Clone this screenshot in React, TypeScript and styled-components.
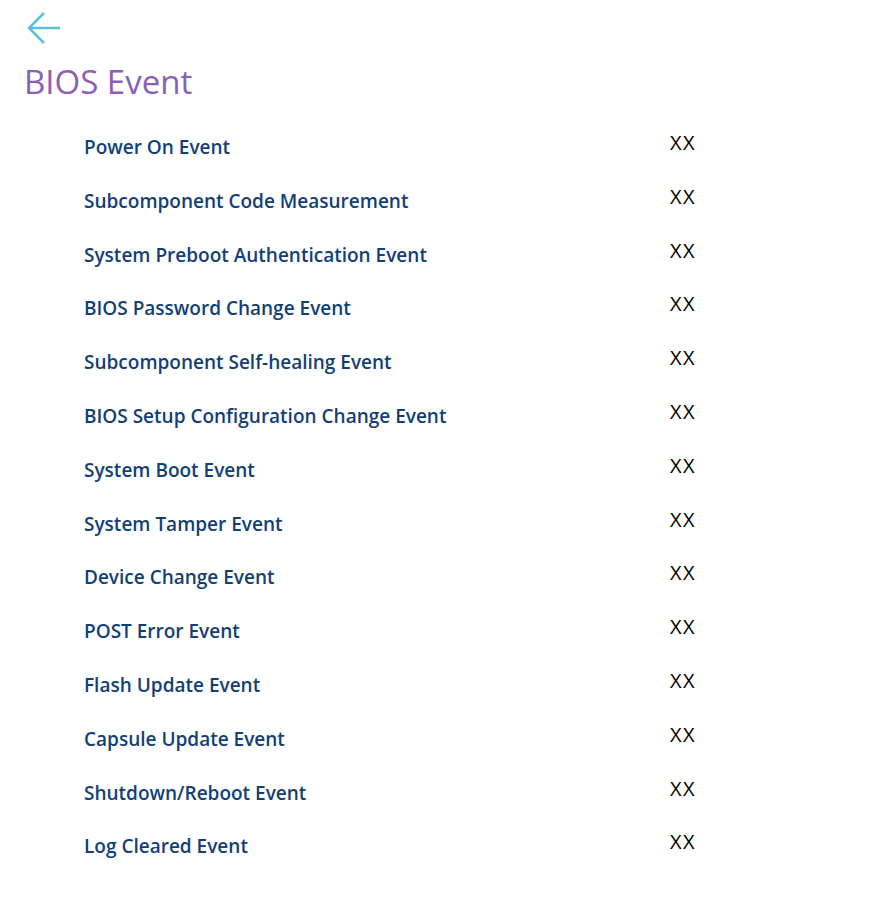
import { Fragment } from 'react'
import styled, { createGlobalStyle } from 'styled-components'

const GlobalStyle = createGlobalStyle`
  body {
    margin: 0;
    background: #fff;
    font-family: 'Open Sans', 'Liberation Sans', sans-serif;
  }
`

const Page = styled.div`
  padding: 10px 24px 40px;
`

const BackButton = styled.button`
  display: block;
  border: 0;
  background: none;
  padding: 0;
  margin-left: 2px;
  width: 36px;
  height: 36px;
  color: #5bc0de;
  cursor: pointer;
`

const Title = styled.h1`
  margin: 16px 0 29px;
  font-size: 33px;
  font-weight: 400;
  color: #8a5fb5;
  line-height: 40px;
`

const EventList = styled.div`
  display: grid;
  grid-template-columns: 586px auto;
  grid-auto-rows: 53.8px;
  padding-left: 60px;
`

const Label = styled.div`
  font-size: 19px;
  font-weight: 600;
  color: #123f78;
  line-height: 24px;
  padding-top: 4px;
`

const Value = styled.div`
  font-size: 20px;
  letter-spacing: 1.5px;
  color: #000;
  line-height: 24px;
`

const events = [
  'Power On Event',
  'Subcomponent Code Measurement',
  'System Preboot Authentication Event',
  'BIOS Password Change Event',
  'Subcomponent Self-healing Event',
  'BIOS Setup Configuration Change Event',
  'System Boot Event',
  'System Tamper Event',
  'Device Change Event',
  'POST Error Event',
  'Flash Update Event',
  'Capsule Update Event',
  'Shutdown/Reboot Event',
  'Log Cleared Event'
]

const App = (): JSX.Element => {
  return (
    <Page>
      <GlobalStyle />
      <BackButton aria-label="Back">
        <svg width="36" height="36" viewBox="0 0 36 36" fill="none" stroke="currentColor" strokeWidth="2.5">
          <path d="M34 18H4" />
          <path d="M18 3L3 18l15 15" />
        </svg>
      </BackButton>
      <Title>BIOS Event</Title>
      <EventList>
        {events.map((name) => (
          <Fragment key={name}>
            <Label>{name}</Label>
            <Value>XX</Value>
          </Fragment>
        ))}
      </EventList>
    </Page>
  )
}

export default App
